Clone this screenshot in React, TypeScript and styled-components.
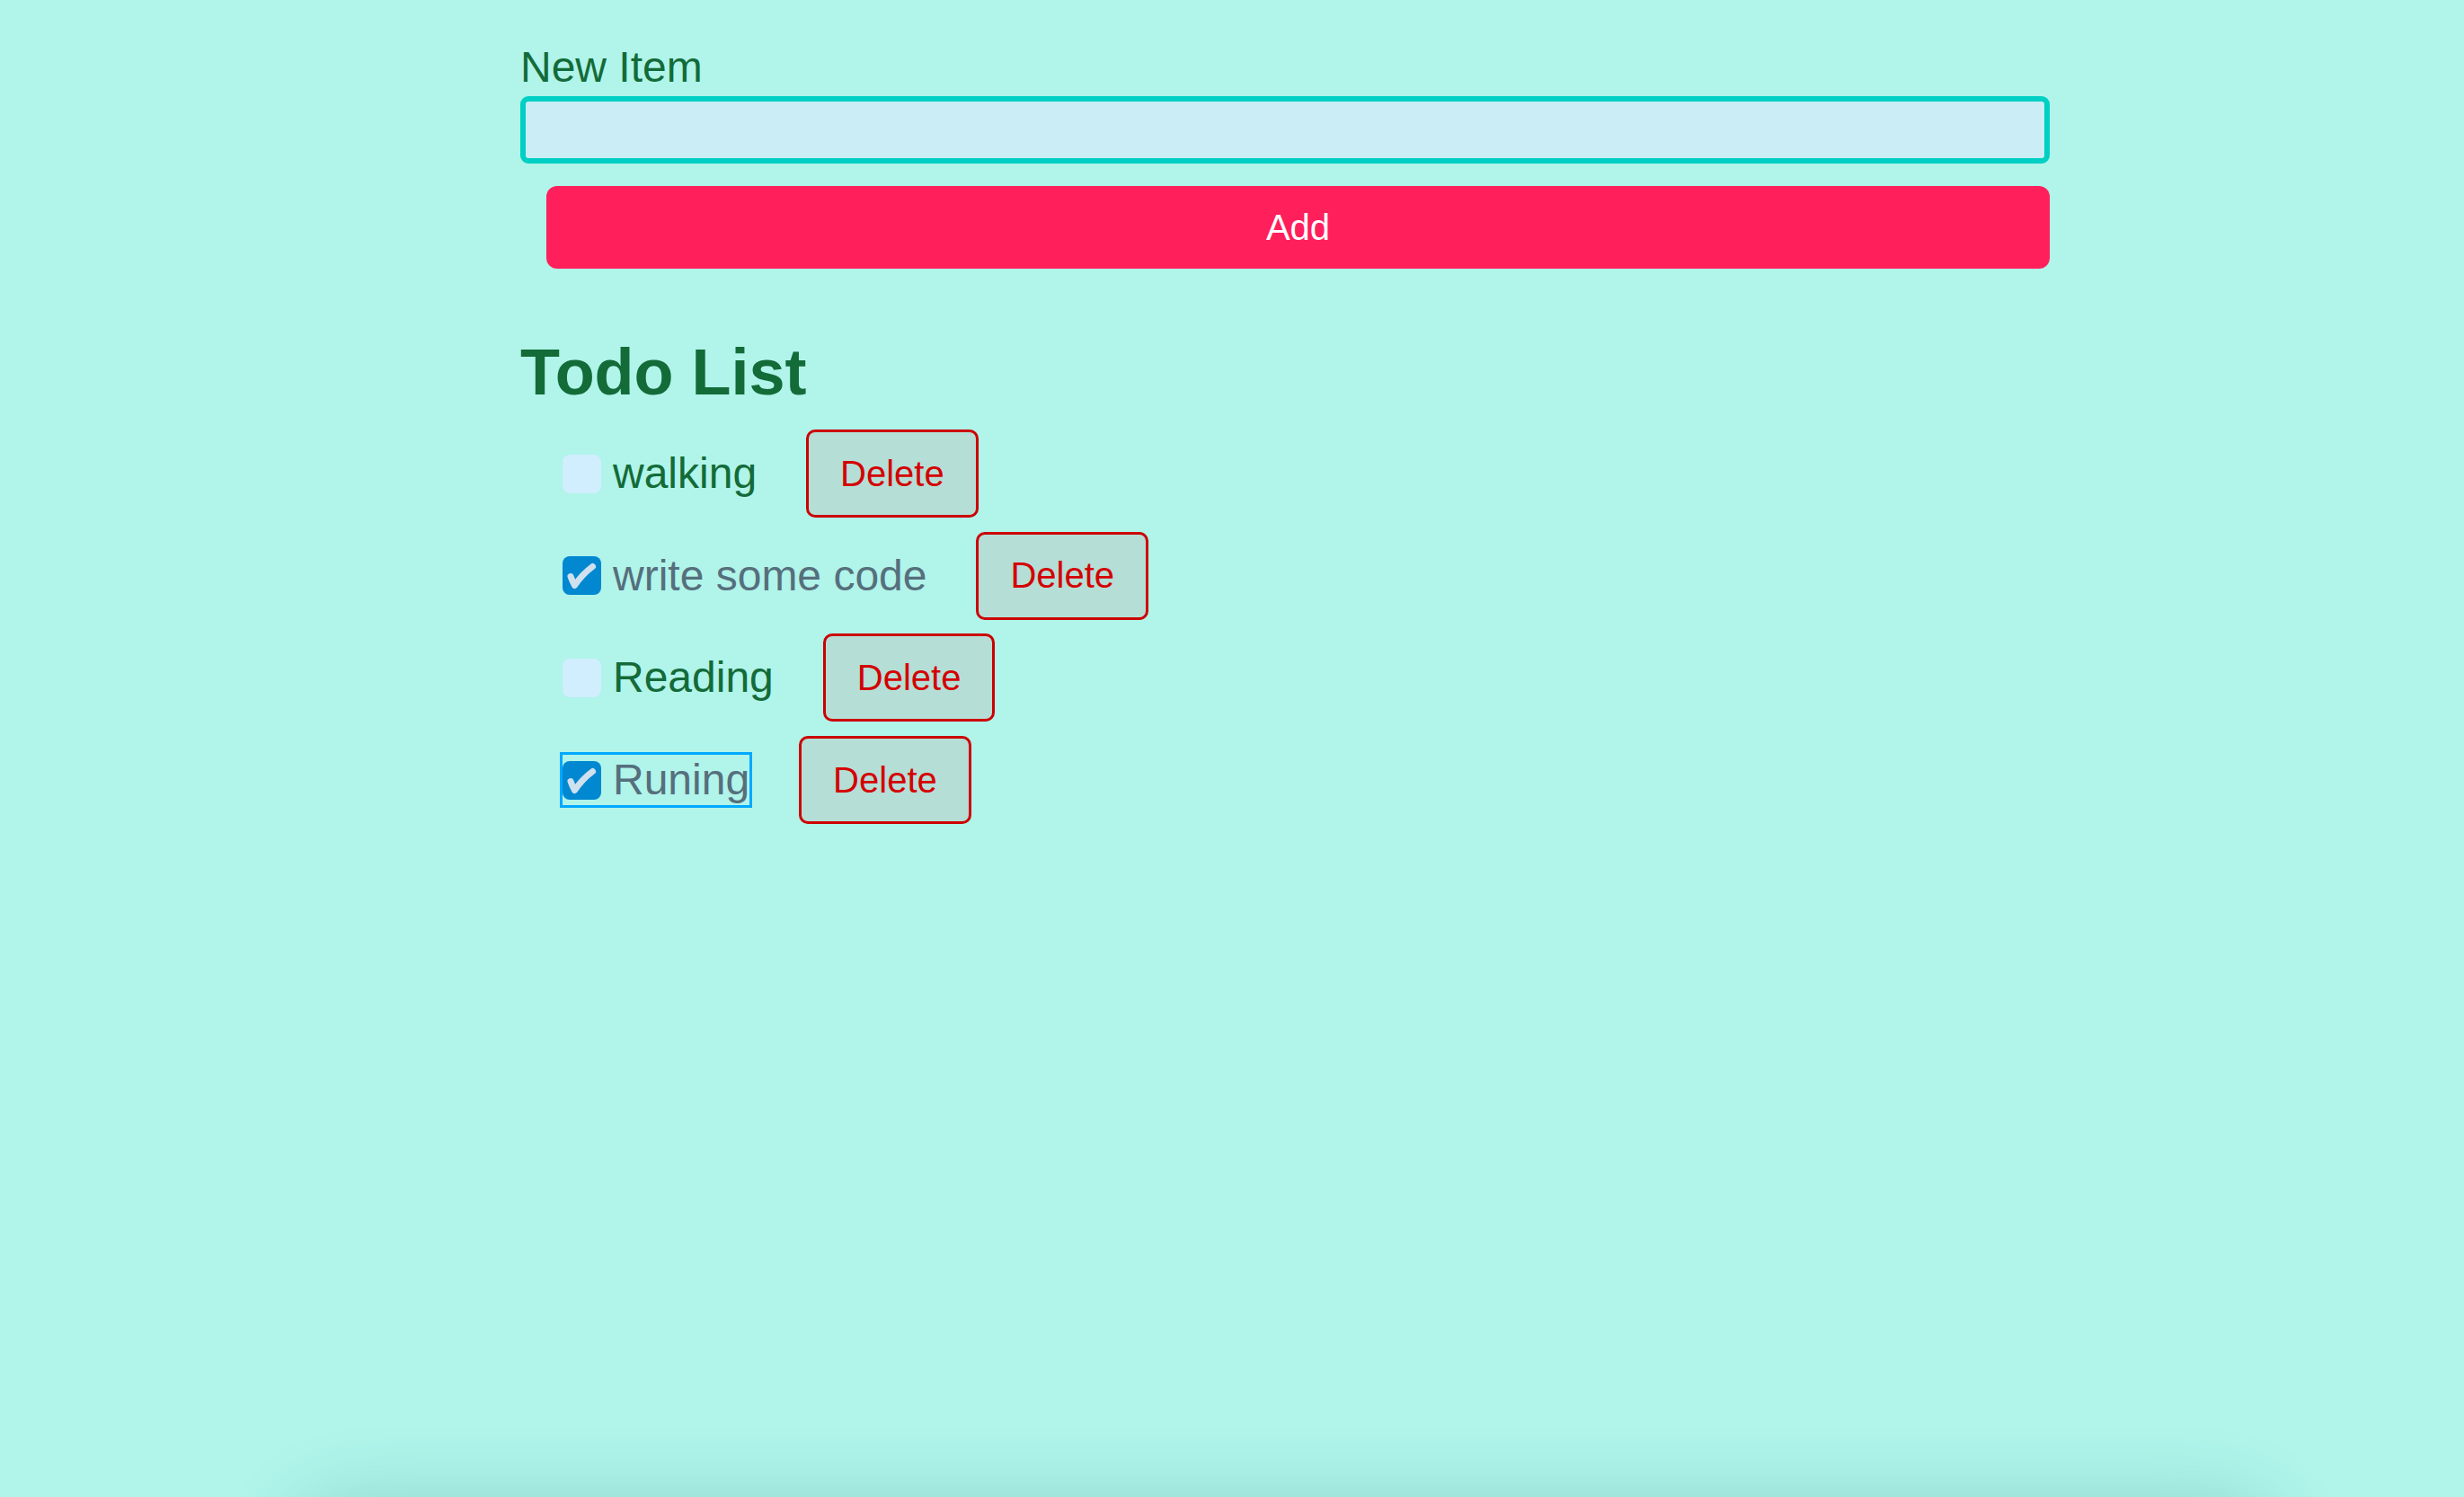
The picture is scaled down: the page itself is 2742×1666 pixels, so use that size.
import React, { useState } from "react";
import styled, { createGlobalStyle } from "styled-components";

const GlobalStyle = createGlobalStyle`
  html, body {
    margin: 0;
    padding: 0;
    background: #b0f4ea;
    font-family: "Liberation Sans", Arial, sans-serif;
  }
`;

const Page = styled.div`
  display: flex;
  flex-direction: column;
`;

const Content = styled.main`
  box-sizing: border-box;
  min-height: 1695px;
  width: 1702px;
  margin-left: 579px;
  padding-top: 48px;
`;

const FieldLabel = styled.label`
  display: block;
  font-size: 48px;
  line-height: 54px;
  color: #136b38;
`;

const TextInput = styled.input`
  display: block;
  box-sizing: border-box;
  width: 100%;
  height: 75px;
  margin-top: 5px;
  border: 6px solid #00cfc4;
  border-radius: 9px;
  background: #cbedf5;
  outline: none;
  font-size: 40px;
  font-family: inherit;
  padding: 0 16px;
`;

const AddButton = styled.button`
  display: block;
  box-sizing: border-box;
  width: calc(100% - 29px);
  height: 92px;
  margin: 25px 0 0 29px;
  border: none;
  border-radius: 12px;
  background: #ff1f5b;
  color: #ffffff;
  font-family: inherit;
  font-size: 40px;
  cursor: pointer;
`;

const Title = styled.h2`
  margin: 75px 0 0;
  font-size: 72px;
  line-height: 80px;
  font-weight: 700;
  color: #136b38;
`;

const List = styled.ul`
  list-style: none;
  margin: 24px 0 0;
  padding: 0 0 0 47px;
  display: flex;
  flex-direction: column;
  gap: 15.7px;
`;

const Row = styled.li`
  display: flex;
  align-items: center;
  height: 98px;
`;

const ItemLabel = styled.label<{ $done: boolean; $focused: boolean }>`
  display: inline-flex;
  align-items: center;
  gap: 13px;
  font-size: 48px;
  line-height: 56px;
  color: ${(p) => (p.$done ? "#566f7c" : "#136b38")};
  outline: ${(p) => (p.$focused ? "3px solid #00a9ff" : "none")};
  cursor: pointer;
`;

const Box = styled.span<{ $checked: boolean }>`
  display: inline-flex;
  align-items: center;
  justify-content: center;
  width: 43px;
  height: 43px;
  border-radius: 8px;
  background: ${(p) => (p.$checked ? "#0288d1" : "#d0eefd")};
  flex-shrink: 0;
`;

const DeleteButton = styled.button`
  box-sizing: border-box;
  height: 98px;
  margin-left: 55px;
  padding: 0 35px;
  border: 3px solid #cc0000;
  border-radius: 10px;
  background: #b5ded6;
  color: #d40000;
  font-family: inherit;
  font-size: 40px;
  cursor: pointer;
`;

const FooterCard = styled.footer`
  width: 2160px;
  height: 300px;
  margin-left: 350px;
  border-radius: 40px;
  background: #a3e2d9;
  box-shadow: 0 0 85px 18px rgba(20, 110, 95, 0.26);
`;

const Check = () => (
  <svg width="43" height="43" viewBox="0 0 43 43" aria-hidden="true">
    <path
      d="M9 22.5 Q11 28 13.5 32.5 Q22 20 33.5 11.5"
      fill="none"
      stroke="#cfe0ee"
      strokeWidth="7"
      strokeLinecap="round"
      strokeLinejoin="round"
    />
  </svg>
);

type Todo = { id: number; text: string; done: boolean };

export default function App() {
  const [todos, setTodos] = useState<Todo[]>([
    { id: 1, text: "walking", done: false },
    { id: 2, text: "write some code", done: true },
    { id: 3, text: "Reading", done: false },
    { id: 4, text: "Runing", done: true },
  ]);
  const [value, setValue] = useState("");
  const focusedId = 4;

  const toggle = (id: number) =>
    setTodos((t) => t.map((x) => (x.id === id ? { ...x, done: !x.done } : x)));
  const remove = (id: number) => setTodos((t) => t.filter((x) => x.id !== id));
  const add = () => {
    if (!value.trim()) return;
    setTodos((t) => [...t, { id: Date.now(), text: value.trim(), done: false }]);
    setValue("");
  };

  return (
    <Page>
      <GlobalStyle />
      <Content>
        <FieldLabel htmlFor="new-item">New Item</FieldLabel>
        <TextInput id="new-item" value={value} onChange={(e) => setValue(e.target.value)} />
        <AddButton onClick={add}>Add</AddButton>
        <Title>Todo List</Title>
        <List>
          {todos.map((t) => (
            <Row key={t.id}>
              <ItemLabel $done={t.done} $focused={t.id === focusedId} onClick={() => toggle(t.id)}>
                <Box $checked={t.done}>{t.done && <Check />}</Box>
                {t.text}
              </ItemLabel>
              <DeleteButton onClick={() => remove(t.id)}>Delete</DeleteButton>
            </Row>
          ))}
        </List>
      </Content>
      <FooterCard />
    </Page>
  );
}
